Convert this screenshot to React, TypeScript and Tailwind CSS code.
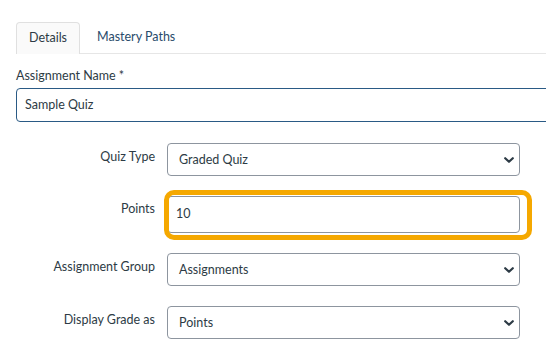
import React from "react";

const Chevron = () => (
  <svg
    className="pointer-events-none absolute right-[5px] top-1/2 -translate-y-1/2"
    width="10"
    height="6"
    viewBox="0 0 10 6"
  >
    <path d="M1.2 1.2 L5 4.8 L8.8 1.2" fill="none" stroke="#2d3b45" strokeWidth="2.2" strokeLinecap="round" strokeLinejoin="round" />
  </svg>
);

const SelectRow = ({ label, value }: { label: string; value: string }) => (
  <div className="flex items-start">
    <div className="w-[139px] shrink-0 pt-[4px] text-right leading-[20px]">{label}</div>
    <div className="relative ml-[12px] h-[33px] w-[353px] rounded-[4px] border border-[#8d959f] bg-white">
      <div className="pl-[11px] leading-[31px]">{value}</div>
      <Chevron />
    </div>
  </div>
);

export default function App() {
  return (
    <div
      className="h-[364px] w-[546px] overflow-hidden bg-white pl-[16px] pt-[22px] text-[12.5px] text-[#2d3b45]"
      style={{ fontFamily: "Lato, 'Noto Sans', sans-serif" }}
    >
      <div className="flex border-b border-[#e6e6e6]">
        <div className="-mb-px flex h-[32px] w-[64px] items-center justify-center rounded-t-[4px] border border-b-0 border-[#e0e0e0] bg-[#fafafa]">
          Details
        </div>
        <div className="flex h-[31px] items-center pl-[17px] text-[#294b6b]">Mastery Paths</div>
      </div>

      <div className="mt-[12px] leading-[20px]">Assignment Name *</div>
      <div className="mt-[2px] flex h-[34px] w-[560px] items-center rounded-[4px] border border-[#2a5a85] bg-white pl-[8px]">
        Sample Quiz
      </div>

      <div className="mt-[21px] flex flex-col gap-[20px]">
        <SelectRow label="Quiz Type" value="Graded Quiz" />
        <div className="flex items-start">
          <div className="w-[139px] shrink-0 pt-[3px] text-right leading-[20px]">Points</div>
          <div className="relative ml-[12px] h-[37px] w-[353px]">
            <div className="flex h-full items-center rounded-[4px] border border-[#8d959f] bg-white pl-[8px]">10</div>
            <div className="pointer-events-none absolute -left-[3px] -top-[6px] h-[50px] w-[368px] rounded-[10px] border-[5px] border-[#f5a800]" />
          </div>
        </div>
        <SelectRow label="Assignment Group" value="Assignments" />
        <SelectRow label="Display Grade as" value="Points" />
      </div>
    </div>
  );
}
